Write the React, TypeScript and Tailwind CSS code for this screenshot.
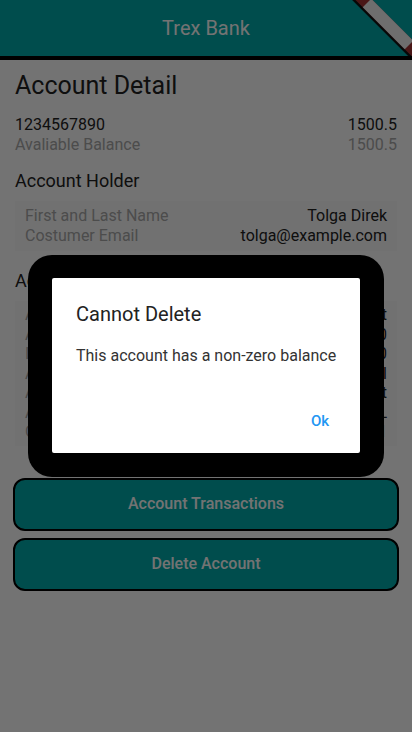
import React from "react";

const font = { fontFamily: "Roboto, 'Noto Sans', sans-serif" };

function Row(props: { label: string; value: string; labelGray?: boolean; valueGray?: boolean }) {
  const { label, value, labelGray, valueGray } = props;
  return (
    <div className="flex items-center justify-between text-[16px] leading-[20px]">
      <span className={labelGray ? "text-[#a8a8a8]" : "text-[#222]"}>{label}</span>
      <span className={valueGray ? "text-[#a8a8a8]" : "text-[#222]"}>{value}</span>
    </div>
  );
}

function DebugBanner() {
  return (
    <svg className="absolute right-0 top-0" width="60" height="56" viewBox="0 0 60 56">
      <line x1="0" y1="-10" x2="66" y2="56" stroke="#111" strokeWidth="14" />
      <line x1="1" y1="-11" x2="67" y2="55" stroke="#a53434" strokeWidth="12" />
      <line x1="15" y1="3" x2="57" y2="45" stroke="#f4f4f4" strokeWidth="12" />
    </svg>
  );
}

export default function App() {
  const info = [
    { label: "Account Type", value: "Checking Account" },
    { label: "Account Number", value: "1234567890" },
    { label: "IBAN", value: "TR00 0000 0000 0000" },
    { label: "Account Branch", value: "Istanbul" },
    { label: "Account Status", value: "Active Account" },
    { label: "Account Currency", value: "TRL" },
    { label: "Created Date", value: "01.01.2021" },
  ];

  return (
    <div className="relative h-[732px] w-[412px] overflow-hidden bg-white" style={font}>
      <header className="relative flex h-[60px] items-center justify-center border-b-4 border-black bg-[#00abab]">
        <span className="text-[20px] text-white">Trex Bank</span>
        <DebugBanner />
      </header>

      <main className="px-[15px] pt-[12px]">
        <h1 className="text-[25px] leading-[28px] text-[#222]">Account Detail</h1>

        <div className="mt-[15px]">
          <Row label="1234567890" value="1500.5" />
          <Row label="Avaliable Balance" value="1500.5" labelGray valueGray />
        </div>

        <h2 className="mt-[15px] text-[18px] leading-[22px] text-[#222]">Account Holder</h2>
        <div className="mt-[9px] bg-[#fbfbfb] px-[10px] py-[5px]">
          <Row label="First and Last Name" value="Tolga Direk" labelGray />
          <Row label="Costumer Email" value="tolga@example.com" labelGray />
        </div>

        <h2 className="mt-[19px] text-[18px] leading-[22px] text-[#222]">Account Information</h2>
        <div className="mt-[9px] bg-[#fbfbfb] px-[10px] py-[4px]">
          {info.map((r) => (
            <div key={r.label} className="flex items-center justify-between text-[16px] leading-[19.5px]">
              <span className="text-[#a8a8a8]">{r.label}</span>
              <span className="text-[#222]">{r.value}</span>
            </div>
          ))}
        </div>

        <div className="-mx-[2px] mt-[32px] flex flex-col gap-[7px]">
          <button className="h-[53px] w-full rounded-[12px] border-2 border-black bg-[#00abab] text-[16px] font-medium text-white">
            Account Transactions
          </button>
          <button className="h-[53px] w-full rounded-[12px] border-2 border-black bg-[#00abab] text-[16px] font-medium text-white">
            Delete Account
          </button>
        </div>
      </main>

      {/* modal barrier */}
      <div className="absolute inset-0 bg-black/55" />

      <div className="absolute left-[28px] top-[255px] h-[222px] w-[356px] rounded-[24px] bg-black px-[24px] pb-[24px] pt-[23px]">
        <div className="flex h-full flex-col rounded-[2px] bg-white">
          <div className="px-[24px] pt-[24px] text-[20px] leading-[24px] text-[#222]">Cannot Delete</div>
          <div className="whitespace-nowrap pl-[24px] pt-[20px] text-[16px] leading-[20px] text-[#333]">
            This account has a non-zero balance
          </div>
          <div className="mt-auto flex justify-end px-[8px] pb-[14px]">
            <button className="h-[36px] min-w-[64px] px-[8px] text-[15px] font-medium text-[#2196f3]">Ok</button>
          </div>
        </div>
      </div>
    </div>
  );
}
